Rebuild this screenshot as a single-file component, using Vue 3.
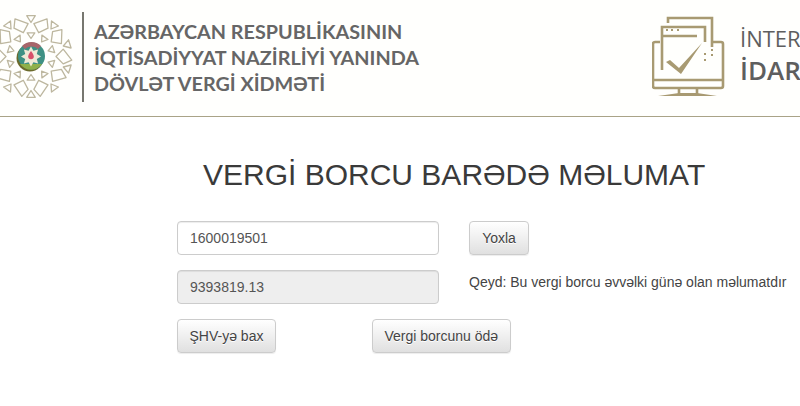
<script setup>
const CX = 31
const CY = 56.5
const pt = (r, a) => {
  const t = (a * Math.PI) / 180
  return [CX + r * Math.sin(t), CY - r * Math.cos(t)]
}
const poly = (...pairs) =>
  pairs.map(([r, a]) => pt(r, a).map((v) => v.toFixed(1)).join(',')).join(' ')
const shapes = []
for (let i = 0; i < 10; i++) {
  const a = i * 36
  // outer small triangle
  shapes.push(poly([41, a - 6], [41, a + 6], [34, a]))
  // inner small triangle
  shapes.push(poly([24, a - 9], [24, a + 9], [18, a]))
  // big kite between the outer triangles
  const k = a + 18
  const lean = i % 2 === 0 ? 5 : -5
  shapes.push(poly([41, k + lean], [33, k + 13], [25, k], [33, k - 13]))
}
const star = []
for (let i = 0; i < 16; i++) {
  const a = i * 22.5
  star.push(pt(i % 2 === 0 ? 10 : 6.3, a).map((v) => v.toFixed(1)).join(','))
}
const starPoints = star.join(' ')
</script>

<template>
  <div class="page">
    <header class="top">
      <div class="brand">
        <svg class="emblem" width="78" height="90" viewBox="0 12 78 90">
          <polygon v-for="(s, i) in shapes" :key="i" :points="s" class="lattice" />
          <circle cx="30" cy="58" r="13.500" fill="#6b6a2c" />
          <circle cx="31.500" cy="56" r="13.500" fill="#3f9184" />
          <path d="M20 64a13.500 13.500 0 0 0 22 0z" fill="#8fb04a" />
          <path d="M22 46a13.500 13.500 0 0 1 19 0l-3 3a10 10 0 0 0-13 0z" fill="#a8656a" />
          <polygon :points="starPoints" class="star" />
          <path d="M31 51c2 2.500 2.800 4.200 2.800 5.500a2.800 2.800 0 0 1-5.600 0c0-1.300.8-3 2.800-5.500z" fill="#d8506a" />
        </svg>
        <div class="rule"></div>
        <div class="ministry">
          <div>AZƏRBAYCAN RESPUBLİKASININ</div>
          <div>İQTİSADİYYAT NAZİRLİYİ YANINDA</div>
          <div>DÖVLƏT VERGİ XİDMƏTİ</div>
        </div>
      </div>
      <div class="service">
        <svg class="monitor" width="74" height="82" viewBox="0 0 74 82" fill="none" stroke="#a89a72" stroke-width="2.600">
          <path d="M16 8V3h44v29" />
          <path d="M10 55V12h43v15" />
          <path d="M10 21h35" />
          <path d="M8 27H3a2 2 0 0 0-2 2v42a2 2 0 0 0 2 2h66a2 2 0 0 0 2-2V29a2 2 0 0 0-2-2h-8" />
          <path d="M1 65h70M27 73v6M45 73v6" />
          <polygon points="6,81 27,78 45,78 65,81" fill="#a89a72" stroke="none" />
          <path d="M14 47l4-2 9 8 23-25-21 31z" fill="#a89a72" stroke="none" />
          <path d="M14 15h2M19 15h2M25 15h2M60 34v2M60 39v2M53 38v2M53 44v2" stroke-width="2" />
        </svg>
        <div class="system">
          <div class="system-one">İNTER</div>
          <div class="system-two">İDAR</div>
        </div>
      </div>
    </header>
    <main class="content">
      <h1>VERGİ BORCU BARƏDƏ MƏLUMAT</h1>
      <div class="form">
        <div class="row">
          <input class="field" value="1600019501" />
          <button class="btn check">Yoxla</button>
        </div>
        <div class="row">
          <input class="field" value="9393819.13" disabled />
          <p class="note">Qeyd: Bu vergi borcu əvvəlki günə olan məlumatdır</p>
        </div>
        <div class="actions">
          <button class="btn">ŞHV-yə bax</button>
          <button class="btn">Vergi borcunu ödə</button>
        </div>
      </div>
    </main>
  </div>
</template>

<style>
html, body { margin: 0; background: #fff; overflow: hidden; }
</style>

<style scoped>
.page {
  width: 800px;
  height: 406px;
  overflow: hidden;
  font-family: "Liberation Sans", Arial, sans-serif;
  color: #333;
}
.top {
  height: 116px;
  display: flex;
  justify-content: space-between;
  border-bottom: 1px solid #a9a387;
  background: #fffffd;
}
.brand { display: flex; align-items: flex-start; }
.emblem { display: block; margin-top: 12px; margin-right: 4px; }
.lattice { fill: none; stroke: #bdb79f; stroke-width: 1.300; stroke-linejoin: round; }
.star { fill: #efe9d6; }
.rule { width: 2px; height: 90px; margin-top: 12px; background: #77776f; }
.ministry {
  margin: 18px 0 0 10px;
  font-family: Lato, sans-serif;
  font-weight: 700;
  font-size: 19.800px;
  line-height: 26px;
  color: #666;
  white-space: nowrap;
}
.service { display: flex; align-items: flex-start; width: 148px; overflow: hidden; flex: none; }
.monitor { display: block; margin: 15px 14px 0 0; flex: none; }
.system {
  margin-top: 22px;
  font-family: "Open Sans", sans-serif;
  color: #5e5e5e;
  white-space: nowrap;
}
.system-one { font-size: 22px; line-height: 32px; }
.system-two { font-size: 26px; line-height: 33px; font-weight: 600; }
.content { display: flex; flex-direction: column; }
h1 {
  margin: 38px 0 0 203px;
  font-size: 30px;
  line-height: 39px;
  font-weight: 400;
  white-space: nowrap;
  color: #3a3a3a;
}
.form { margin: 27px 0 0 177px; display: flex; flex-direction: column; gap: 15px; }
.row { display: flex; align-items: flex-start; gap: 30px; height: 34px; }
.field {
  width: 262px;
  height: 34px;
  box-sizing: border-box;
  padding: 6px 12px;
  border: 1px solid #ccc;
  border-radius: 4px;
  background: #fff;
  box-shadow: inset 0 1px 1px rgba(0, 0, 0, .075);
  color: #555;
  font: 14px/20px "Liberation Sans", Arial, sans-serif;
}
.field:disabled { background: #eee; opacity: 1; color: #555; }
.btn {
  height: 34px;
  padding: 6px 11.500px;
  border: 1px solid #ccc;
  border-radius: 4px;
  background: linear-gradient(to bottom, #fff 0, #e0e0e0 100%);
  box-shadow: inset 0 1px 0 rgba(255, 255, 255, .15), 0 1px 1px rgba(0, 0, 0, .075);
  color: #444;
  text-shadow: 0 1px 0 #fff;
  font: 14px/20px "Liberation Sans", Arial, sans-serif;
  white-space: nowrap;
}
.check { min-width: 60px; }
.note { margin: 2px 0 0; font-size: 14px; line-height: 20px; white-space: nowrap; color: #444; }
.actions { display: flex; gap: 96px; }
</style>
